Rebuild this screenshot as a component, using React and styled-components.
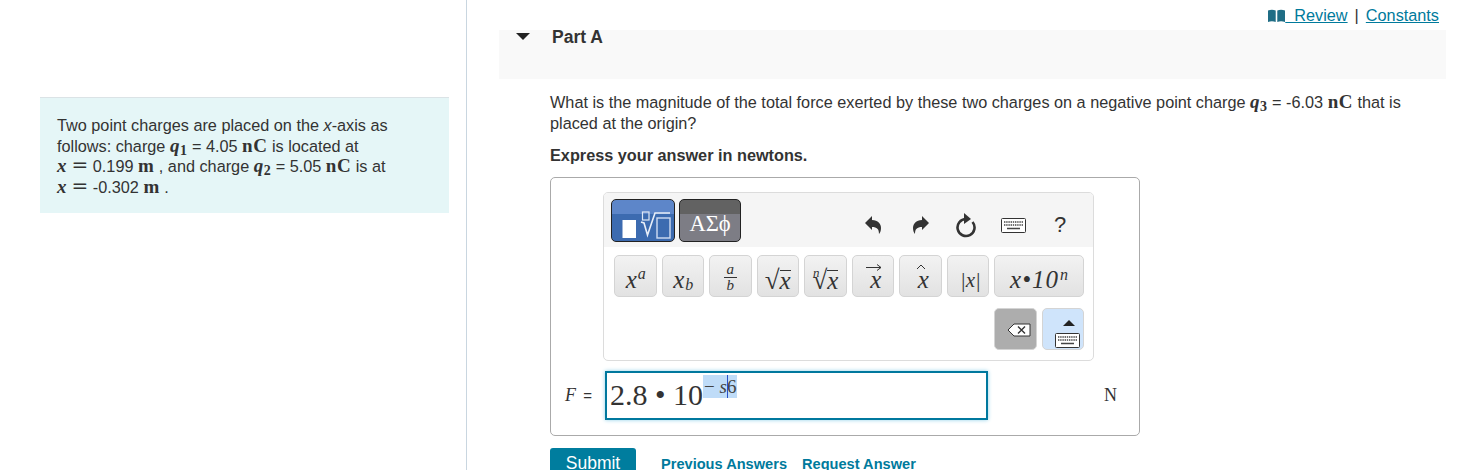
import React from 'react'
import styled, { createGlobalStyle } from 'styled-components'

const Global = createGlobalStyle`
  html, body { margin: 0; padding: 0; background: #fff; }
  body { font-family: "Liberation Sans", Arial, sans-serif; color: #333; font-size: 16.25px; }
`
const Page = styled.div`
  display: flex;
  width: 1457px;
  height: 470px;
  overflow: hidden;
`
const Side = styled.aside`
  width: 467px;
  flex: none;
  box-sizing: border-box;
  border-right: 1px solid #c9d6e0;
  padding: 97px 17px 0 40px;
  height: 470px;
`
const Intro = styled.div`
  background: #e5f6f7;
  border-top: 1px solid #dbe3e6;
  padding: 17px 10px 16px 17px;
  line-height: 20.5px;
  height: 116px;
  box-sizing: border-box;
  white-space: nowrap;
`
const M = styled.span`
  font-family: "Liberation Serif", "DejaVu Serif", serif;
  font-weight: ${p => (p.$bold ? 700 : 400)};
  font-style: ${p => (p.$italic ? 'italic' : 'normal')};
  font-size: 19px;
  line-height: 0;
  letter-spacing: .5px;
  color: #333;
`
const Eq = styled.span`
  font-family: "DejaVu Serif", serif;
  font-size: 20px;
  line-height: 0;
  color: #333;
`
const Sub = styled.sub`
  font-size: 14px;
  font-style: normal;
  line-height: 0;
  vertical-align: -3px;
`
const Main = styled.main`
  flex: 1;
  min-width: 0;
  padding-left: 32px;
  padding-right: 11px;
`
const TopLinks = styled.div`
  height: 30px;
  box-sizing: border-box;
  padding: 1px 7px 0 0;
  display: flex;
  justify-content: flex-end;
  align-items: center;
  gap: 7px;
`
const TealLink = styled.a`
  color: #007a9c;
  text-decoration: underline;
  display: inline-flex;
  align-items: center;
  white-space: pre;
`
const PartHead = styled.div`
  background: #f9f9f9;
  height: 49px;
  display: flex;
  align-items: flex-start;
`
const Caret = styled.span`
  width: 0;
  height: 0;
  margin: 3px 22px 0 17px;
  border-left: 7.5px solid transparent;
  border-right: 7.5px solid transparent;
  border-top: 7px solid #222;
`
const PartTitle = styled.h3`
  margin: -2px 0 0;
  font-size: 17.5px;
  line-height: 18px;
  color: #333;
`
const Body = styled.div`
  padding: 13px 0 0 51px;
`
const Question = styled.p`
  margin: 0;
  line-height: 20.5px;
  width: 880px;
`
const Hint = styled.p`
  margin: 12px 0 12px;
  line-height: 20px;
  font-weight: 700;
`
const AnswerBox = styled.div`
  width: 590px;
  height: 259px;
  box-sizing: border-box;
  border: 1px solid #aaa;
  border-radius: 5px;
  padding-top: 14px;
`
const Palette = styled.div`
  width: 491px;
  height: 169px;
  margin-left: 52px;
  box-sizing: border-box;
  border: 1px solid #dcdcdc;
  border-radius: 5px;
  overflow: hidden;
`
const PaletteTop = styled.div`
  height: 54px;
  background: #f5f5f5;
  display: flex;
  align-items: flex-start;
  padding: 6px 11px 0 7px;
  box-sizing: border-box;
`
const Tab = styled.div`
  width: ${p => p.$w}px;
  height: 43px;
  box-sizing: border-box;
  border: 1px solid #222;
  border-radius: 5px;
  margin-right: 4px;
  color: #fff;
  display: flex;
  align-items: center;
  justify-content: center;
  background: ${p => p.$active
    ? 'linear-gradient(#5d86c9 0, #5d86c9 14px, #3c6bb0 14px, #3c6bb0 100%)'
    : 'linear-gradient(#626262 0, #626262 14px, #7d7d85 14px, #7d7d85 100%)'};
  font-family: "Liberation Serif", serif;
  font-size: 22.5px;
  padding-top: ${p => (p.$active ? 0 : 7)}px;
`
const Tools = styled.div`
  margin-left: auto;
  display: flex;
  align-items: center;
  height: 36px;
  padding-top: 8px;
`
const ToolSlot = styled.span`
  width: ${p => p.$w}px;
  display: flex;
  justify-content: center;
  color: #333;
  font-size: 22px;
`
const KeyRow = styled.div`
  display: flex;
  gap: 5px;
  padding: ${p => p.$pad};
  justify-content: ${p => (p.$end ? 'flex-end' : 'flex-start')};
`
const Key = styled.div`
  width: ${p => p.$w || 42.5}px;
  height: 42px;
  box-sizing: border-box;
  border: 1px solid #d4d4d4;
  border-radius: 5px;
  background: ${p => p.$bg || 'linear-gradient(#f2f2f2, #e2e2e2)'};
  display: flex;
  align-items: center;
  justify-content: center;
  font-family: "Liberation Serif", serif;
  font-style: italic;
  font-size: ${p => p.$size || 25}px;
  letter-spacing: ${p => p.$track || 0}px;
  color: #333;
  padding-top: 8px;
  position: relative;
  white-space: pre;
`
const Sup = styled.span`
  font-size: ${p => p.$size || 16}px;
  position: relative;
  top: ${p => p.$top}px;
  left: 1px;
`
const Frac = styled.span`
  display: flex;
  flex-direction: column;
  align-items: center;
  font-size: 15px;
  line-height: 13px;
  margin-top: -6px;
`
const FracLine = styled.span`
  width: 13px;
  height: 1px;
  background: #333;
  margin: 1px 0;
`
const Accent = styled.span`
  position: absolute;
  top: 8px;
  left: 2px;
  right: 0;
  display: flex;
  justify-content: center;
`
const Radical = styled.span`
  font-style: normal;
  font-size: 27px;
  line-height: 22px;
`
const Radicand = styled.span`
  border-top: 1px solid #333;
  line-height: 20px;
`
const Nudge = styled.span`
  display: flex;
  margin: ${p => p.$m};
`
const InputRow = styled.div`
  display: flex;
  align-items: center;
  margin-top: 10px;
`
const FLabel = styled.span`
  width: 54px;
  box-sizing: border-box;
  padding-left: 14px;
  font-size: 15px;
  white-space: pre;
`
const FVar = styled.i`
  font-family: "Liberation Serif", serif;
  font-size: 18px;
  margin-right: 3px;
`
const MathInput = styled.div`
  width: 383px;
  height: 49px;
  box-sizing: border-box;
  border: 2px solid #00789e;
  box-shadow: 0 0 4px #8fd0e8;
  font-family: "Liberation Serif", serif;
  font-size: 30px;
  color: #333;
  display: flex;
  align-items: center;
  padding: 0 0 2px 3px;
  white-space: pre;
`
const Exponent = styled.span`
  background: #bfdcf8;
  font-size: 19px;
  line-height: 23px;
  height: 23px;
  align-self: flex-start;
  margin-top: 2px;
  padding: 0 1px;
  position: relative;
  color: #444;
`
const Cursor = styled.span`
  position: absolute;
  right: 9px;
  top: 0;
  width: 1px;
  height: 23px;
  background: #2a50c8;
`
const Unit = styled.span`
  margin-left: 116px;
  font-family: "Liberation Serif", serif;
  font-size: 18px;
`
const Actions = styled.div`
  display: flex;
  align-items: center;
  margin-top: 12px;
`
const Submit = styled.button`
  width: 86px;
  height: 34px;
  border: 0;
  border-radius: 3px;
  background: #007d9e;
  color: #fff;
  font: 17.5px "Liberation Sans", sans-serif;
  padding: 0 0 3px;
  margin-right: 25px;
`
const ActionLink = styled.a`
  color: #007a9c;
  font-weight: 700;
  font-size: 14.6px;
  margin-right: 15px;
  margin-top: -3px;
`

const BookIcon = () => (
  <svg width="17" height="13" viewBox="0 0 17 13"><path d="M0 1.500Q4 0 7.700 1.500V13Q4 11.500 0 13zM9.300 1.500Q13 0 17 1.500V13Q13 11.500 9.300 13z" fill="#1f6d85" /></svg>
)
const Undo = ({ flip }) => (
  <svg width="18" height="20" viewBox="0 0 18 20" style={flip ? { transform: 'scaleX(-1)' } : undefined}>
    <path d="M1 8l7-7v4c6 0 9 4 9 8 0 3-1 5-2 6 0-5-2-7-7-7v3z" fill="#333" />
  </svg>
)
const Refresh = () => (
  <svg width="22" height="26" viewBox="0 0 22 26">
    <path d="M11 7A8.500 8.500 0 1 0 17.500 10" fill="none" stroke="#333" strokeWidth="2.600" />
    <path d="M9 1l7 6-7 5z" fill="#333" />
  </svg>
)
const Keyboard = ({ w = 25, h = 15 }) => (
  <svg width={w} height={h} viewBox="0 0 25 15">
    <rect x=".5" y=".5" width="24" height="14" rx="1" fill="#fff" stroke="#333" />
    <path d="M3 4h19M3 7h19" stroke="#444" strokeWidth="1.600" strokeDasharray="1.400 .8" />
    <path d="M6 10.500h13" stroke="#444" strokeWidth="1.600" />
  </svg>
)
const TemplateIcon = () => (
  <svg width="62" height="41" viewBox="0 0 62 41">
    <rect x="10.500" y="20" width="13.500" height="18" fill="#fff" />
    <rect x="30.500" y="12" width="6.500" height="8" fill="none" stroke="#dfe8f6" strokeWidth="1.200" />
    <path d="M29 22l3 1 3.500 12L43 13h15" fill="none" stroke="#e8eef8" strokeWidth="1.600" />
    <rect x="45" y="18" width="13" height="20" fill="none" stroke="#cfdcf2" strokeWidth="1.400" />
  </svg>
)
const RadicalKey = ({ n }) => (
  <Key>
    {n && <Sup $top={-7} $size={13} style={{ marginRight: -6 }}>n</Sup>}
    <Radical>√</Radical>
    <Radicand>x</Radicand>
  </Key>
)

export default function App() {
  return (
    <Page>
      <Global />
      <Side>
        <Intro>
          Two point charges are placed on the <i>x</i>-axis as<br />
          follows: charge <M $bold $italic>q<Sub>1</Sub></M> = 4.05 <M $bold>nC</M> is located at<br />
          <M $bold $italic>x</M> <Eq>=</Eq> 0.199 <M $bold>m</M> , and charge <M $bold $italic>q<Sub>2</Sub></M> = 5.05 <M $bold>nC</M> is at<br />
          <M $bold $italic>x</M> <Eq>=</Eq> -0.302 <M $bold>m</M> .
        </Intro>
      </Side>
      <Main>
        <TopLinks>
          <TealLink><BookIcon />  Review</TealLink>
          <span>|</span>
          <TealLink>Constants</TealLink>
        </TopLinks>
        <PartHead>
          <Caret />
          <PartTitle>Part A</PartTitle>
        </PartHead>
        <Body>
          <Question>
            What is the magnitude of the total force exerted by these two charges on a negative point charge <M $bold $italic>q<Sub>3</Sub></M> = -6.03 <M $bold>nC</M> that is placed at the origin?
          </Question>
          <Hint>Express your answer in newtons.</Hint>
          <AnswerBox>
            <Palette>
              <PaletteTop>
                <Tab $w={64} $active><TemplateIcon /></Tab>
                <Tab $w={62}>ΑΣϕ</Tab>
                <Tools>
                  <ToolSlot $w={50}><Undo /></ToolSlot>
                  <ToolSlot $w={46}><Undo flip /></ToolSlot>
                  <ToolSlot $w={44}><Refresh /></ToolSlot>
                  <ToolSlot $w={50}><Keyboard /></ToolSlot>
                  <ToolSlot $w={44}>?</ToolSlot>
                </Tools>
              </PaletteTop>
              <KeyRow $pad="8px 0 0 10px">
                <Key>x<Sup $top={-6}>a</Sup></Key>
                <Key>x<Sup $top={5}>b</Sup></Key>
                <Key><Frac>a<FracLine />b</Frac></Key>
                <RadicalKey />
                <RadicalKey n />
                <Key><Accent><svg width="16" height="7" viewBox="0 0 16 7"><path d="M0 3.500h15M11 .5l4 3-4 3" fill="none" stroke="#333" /></svg></Accent> x</Key>
                <Key><Accent><svg width="10" height="6" viewBox="0 0 10 6"><path d="M1 5l4-4 4 4" fill="none" stroke="#333" /></svg></Accent> x</Key>
                <Key $size={21}> |x|</Key>
                <Key $w={90} $size={25} $track={1}>x•10<Sup $top={-5}>n</Sup></Key>
              </KeyRow>
              <KeyRow $pad="11px 9px 0 0" $end>
                <Key $bg="#adadad">
                  <svg width="24" height="14" viewBox="0 0 24 14" style={{ margin: '-6px 0 0 8px' }}>
                    <path d="M7 1h16v12H7L1 7z" fill="#fff" stroke="#333" />
                    <path d="M11 3.500l7 7M18 3.500l-7 7" stroke="#333" strokeWidth="1.400" />
                  </svg>
                </Key>
                <Key $bg="#cfe4fb">
                  <svg width="12" height="6" viewBox="0 0 12 6" style={{ position: 'absolute', top: 11, left: 20 }}><path d="M6 0l6 6H0z" fill="#222" /></svg>
                  <Nudge $m="14px 0 0 9px"><Keyboard /></Nudge>
                </Key>
              </KeyRow>
            </Palette>
            <InputRow>
              <FLabel><FVar>F</FVar> =</FLabel>
              <MathInput>
                2.8 • 10
                <Exponent>− <i>s</i>6<Cursor /></Exponent>
              </MathInput>
              <Unit>N</Unit>
            </InputRow>
          </AnswerBox>
          <Actions>
            <Submit>Submit</Submit>
            <ActionLink>Previous Answers</ActionLink>
            <ActionLink>Request Answer</ActionLink>
          </Actions>
        </Body>
      </Main>
    </Page>
  )
}
